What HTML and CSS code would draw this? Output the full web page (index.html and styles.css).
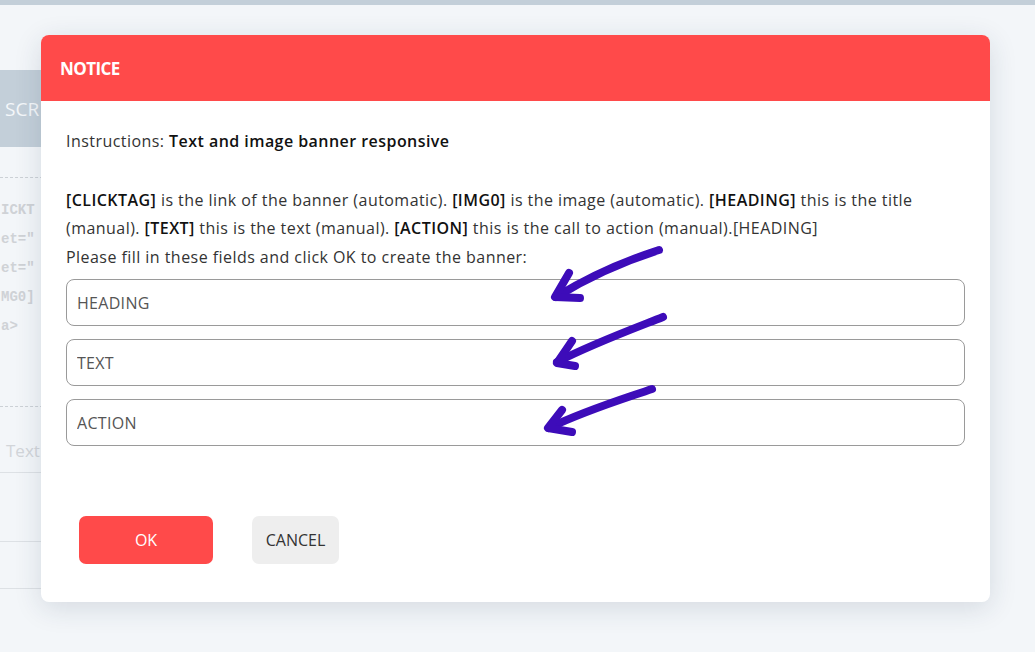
FILE: index.html
```html
<!DOCTYPE html>
<html>
<head>
<meta charset="utf-8">
<link rel="stylesheet" href="styles.css">
</head>
<body>
<div class="topbar"></div>
<div class="page">
  <div class="tabs"><span class="tab">SCR</span></div>
  <div class="code">
    <div class="dash"></div>
    <div class="codetext">
      <div>ICKT</div>
      <div>et="</div>
      <div>et="</div>
      <div>MG0]</div>
      <div>a&gt;</div>
    </div>
    <div class="dash"></div>
  </div>
  <div class="row row-text"><span>Text</span></div>
  <div class="row row-a"></div>
  <div class="row row-b"></div>
</div>

<div class="overlay">
  <div class="modal">
    <div class="modal-head">NOTICE</div>
    <div class="modal-body">
      <p class="instr">Instructions: <b>Text and image banner responsive</b></p>
      <p class="desc"><b>[CLICKTAG]</b> is the link of the banner (automatic). <b>[IMG0]</b> is the image (automatic). <b>[HEADING]</b> this is the title<br>(manual). <b>[TEXT]</b> this is the text (manual). <b>[ACTION]</b> this is the call to action (manual).[HEADING]<br>Please fill in these fields and click OK to create the banner:</p>
      <div class="fields">
        <input class="field" type="text" placeholder="HEADING">
        <input class="field" type="text" placeholder="TEXT">
        <input class="field" type="text" placeholder="ACTION">
      </div>
    </div>
    <div class="modal-foot">
      <button class="btn btn-ok">OK</button>
      <button class="btn btn-cancel">CANCEL</button>
    </div>
  </div>
</div>

<svg class="arrows" width="1035" height="652" viewBox="0 0 1035 652">
  <g fill="none" stroke="#3d0cb9" stroke-width="8" stroke-linecap="round" stroke-linejoin="round">
    <path d="M659 250 C 628 260, 590 276, 556 297"/>
    <path d="M569 273 L555 297 L580 298"/>
    <path d="M663 317 C 630 330, 592 344, 557 362"/>
    <path d="M572 341 L557 363 L575 366"/>
    <path d="M652 389 C 620 400, 584 411, 549 428"/>
    <path d="M562 410 L548 428 L572 432"/>
  </g>
</svg>
</body>
</html>
```

FILE: styles.css
```css
* { box-sizing: border-box; }
html, body { margin: 0; padding: 0; }
body {
  width: 1035px;
  height: 652px;
  overflow: hidden;
  background: #f3f6f9;
  font-family: "Open Sans", "Noto Sans", sans-serif;
  position: relative;
}
.topbar { height: 5px; background: #c3cfd9; }
.page { padding-top: 65px; width: 900px; }
.tabs {
  height: 77px;
  background: #c3cfd9;
  display: flex;
  align-items: center;
}
.tab {
  color: #f4f7fa;
  font-size: 19px;
  padding-left: 5px;
}
.code { padding-top: 30px; }
.dash { border-top: 1px dashed #ccd1d6; }
.codetext {
  padding: 18px 0 65px 1px;
  font-family: "Liberation Mono", monospace;
  font-weight: bold;
  font-size: 14px;
  line-height: 29px;
  color: #cfd2d6;
}
.row { border-bottom: 1px solid #dde1e5; }
.row-text { height: 66px; display: flex; align-items: flex-end; padding-bottom: 10px; }
.row-text span { color: #d2d5d9; font-size: 17px; padding-left: 6px; }
.row-a { height: 69px; }
.row-b { height: 47px; }

.overlay {
  position: absolute;
  left: 41px;
  top: 35px;
}
.modal {
  width: 949px;
  height: 567px;
  background: #fff;
  border-radius: 8px;
  box-shadow: 0 6px 28px rgba(30, 50, 80, 0.14);
  display: flex;
  flex-direction: column;
  overflow: hidden;
}
.modal-head {
  height: 66px;
  background: #ff4a4a;
  color: #fff;
  font-weight: 700;
  font-size: 17px;
  display: flex;
  align-items: center;
  padding-left: 19px;
  letter-spacing: -0.6px;
}
.modal-body { padding: 26px 25px 0 25px; color: #333; font-size: 16px; letter-spacing: 0.45px; }
.modal-body p { margin: 0; line-height: 28.5px; }
.modal-body b { color: #111; font-weight: 600; }
.instr { margin-bottom: 30px !important; }
.desc { margin-bottom: 8px !important; }
.fields { display: flex; flex-direction: column; gap: 13px; }
.field {
  width: 899px;
  height: 47px;
  border: 1px solid #9a9a9a;
  border-radius: 8px;
  padding: 0 10px;
  font-family: inherit;
  font-size: 16px;
  letter-spacing: 0.3px;
  color: #555;
  background: #fff;
}
.field::placeholder { color: #555; }
.modal-foot {
  display: flex;
  gap: 39px;
  padding: 70px 0 0 38px;
}
.btn {
  height: 48px;
  border: none;
  border-radius: 7px;
  font-family: inherit;
  font-size: 16px;
}
.btn-ok { width: 134px; background: #ff4a4a; color: #fff; }
.btn-cancel { width: 87px; background: #eeeeee; color: #333; }
.arrows { position: absolute; left: 0; top: 0; pointer-events: none; }
```
